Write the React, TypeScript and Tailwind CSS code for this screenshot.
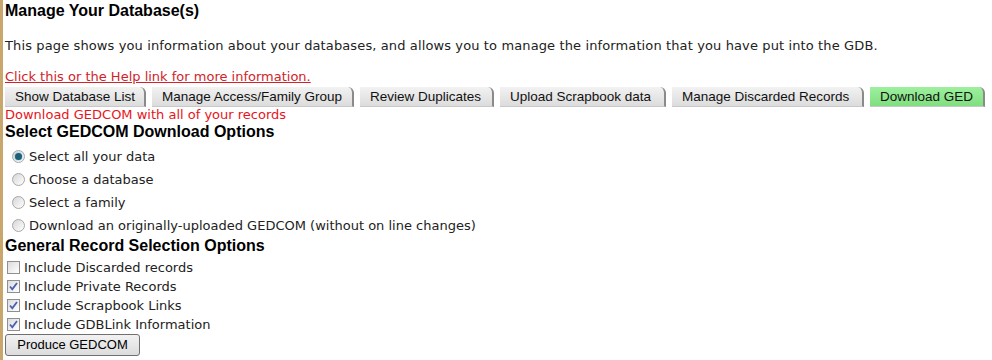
import React from 'react';

const tabs = [
  { label: 'Show Database List', w: 'w-[141px]' },
  { label: 'Manage Access/Family Group', w: 'w-[202px]' },
  { label: 'Review Duplicates', w: 'w-[134px]' },
  { label: 'Upload Scrapbook data', w: 'w-[166px]' },
  { label: 'Manage Discarded Records', w: 'w-[192px]' },
];

const radios = [
  'Select all your data',
  'Choose a database',
  'Select a family',
  'Download an originally-uploaded GEDCOM (without on line changes)',
];

const checks = [
  { label: 'Include Discarded records', on: false },
  { label: 'Include Private Records', on: true },
  { label: 'Include Scrapbook Links', on: true },
  { label: 'Include GDBLink Information', on: true },
];

function Tab({ label, w, active }: { label: string; w: string; active?: boolean }) {
  return (
    <div
      className={`${w} h-[20px] shrink-0 rounded-tr-[6px] border-r-[2px] border-b border-r-[#8a8a8a] border-b-[#c8c8c8] pl-[10px] text-[13.5px] leading-[20px] text-[#111] ${
        active
          ? 'bg-gradient-to-b from-[#9ef09e] to-[#7fdf7f]'
          : 'bg-gradient-to-b from-[#f2f2f2] to-[#dcdcdc]'
      }`}
      style={{ fontFamily: 'Arial, "Liberation Sans", sans-serif' }}
    >
      {label}
    </div>
  );
}

function Radio({ on }: { on: boolean }) {
  return (
    <span className="mr-[4px] flex h-[13px] w-[13px] shrink-0 items-center justify-center rounded-full border border-[#a8a8a8] bg-gradient-to-br from-[#d6d6d6] to-white">
      {on && <span className="h-[7px] w-[7px] rounded-full bg-[#1f5f7a] shadow-[0_0_2px_#5fb3d4]" />}
    </span>
  );
}

function Check({ on }: { on: boolean }) {
  return (
    <span className="mr-[4px] flex h-[13px] w-[13px] shrink-0 items-center justify-center border border-[#8e8f8f] bg-gradient-to-br from-[#dcdcdc] to-white">
      {on && (
        <svg viewBox="0 0 11 11" className="h-[11px] w-[11px]">
          <path d="M2 5.5 L4.3 8.3 L9 2" fill="none" stroke="#4a5fb0" strokeWidth="1.8" />
        </svg>
      )}
    </span>
  );
}

export default function App() {
  const verdana = { fontFamily: 'Verdana, "DejaVu Sans", sans-serif' };
  const arial = { fontFamily: 'Arial, "Liberation Sans", sans-serif' };
  return (
    <div className="flex h-[360px] w-[992px] bg-white">
      <div className="w-[3px] shrink-0 bg-[#c9a66b]" />
      <div className="flex flex-1 flex-col pl-[2px]">
        <h1 className="h-[22px] text-[16px] leading-[22px] font-bold text-black" style={arial}>
          Manage Your Database(s)
        </h1>
        <p className="mt-[15px] h-[18px] text-[13px] leading-[18px] tracking-[0.12px] text-[#222]" style={verdana}>
          This page shows you information about your databases, and allows you to manage the information that you have put into the GDB.
        </p>
        <a className="mt-[13px] h-[18px] text-[13px] leading-[18px] text-[#d2232a] underline" style={verdana}>
          Click this or the Help link for more information.
        </a>
        <div className="mt-[1px] flex gap-[6px]">
          {tabs.map(t => (
            <Tab key={t.label} label={t.label} w={t.w} />
          ))}
          <Tab label="Download GED" w="w-[115px]" active />
        </div>
        <div className="h-[16px] text-[13px] leading-[16px] text-[#e8141b]" style={verdana}>
          Download GEDCOM with all of your records
        </div>
        <h2 className="h-[18px] text-[16px] leading-[18px] font-bold text-black" style={arial}>
          Select GEDCOM Download Options
        </h2>
        <div className="mt-[4px] flex flex-col">
          {radios.map((r, i) => (
            <div key={r} className="flex h-[23px] items-center pl-[7px] text-[13px] text-[#222]" style={verdana}>
              <Radio on={i === 0} />
              {r}
            </div>
          ))}
        </div>
        <h2 className="h-[18px] text-[16px] leading-[18px] font-bold text-black" style={arial}>
          General Record Selection Options
        </h2>
        <div className="mt-[3px] flex flex-col">
          {checks.map(c => (
            <div key={c.label} className="flex h-[19px] items-center pl-[2px] text-[13px] text-[#222]" style={verdana}>
              <Check on={c.on} />
              {c.label}
            </div>
          ))}
        </div>
        <button
          className="mt-0 h-[22px] w-[135px] rounded-[3px] border border-[#707070] bg-gradient-to-b from-[#f2f2f2] to-[#dcdcdc] text-[13px] text-black"
          style={arial}
        >
          Produce GEDCOM
        </button>
      </div>
    </div>
  );
}
